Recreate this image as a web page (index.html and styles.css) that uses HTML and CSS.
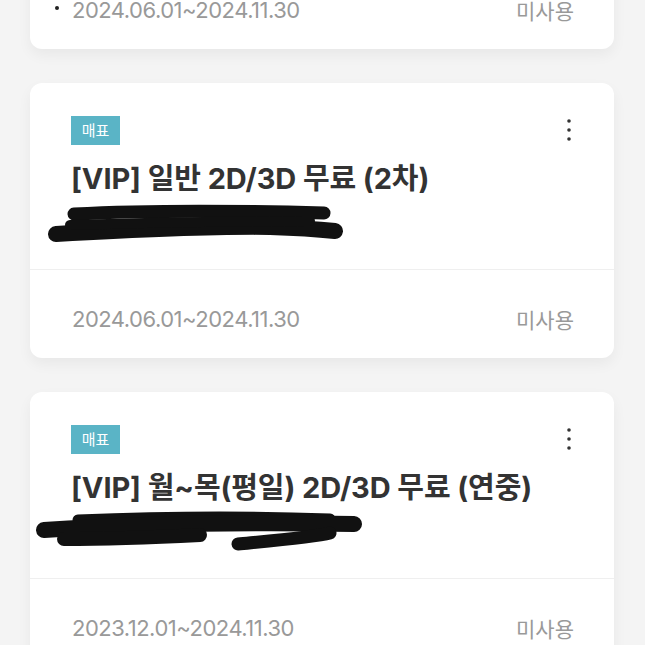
FILE: index.html
```html
<!DOCTYPE html>
<html lang="ko">
<head>
    <meta charset="UTF-8">
    <meta name="viewport" content="width=device-width, initial-scale=1.0">
    <title>쿠폰함</title>
    <link rel="stylesheet" href="styles.css">
</head>
<body>
    <div class="list">

        <!-- first card, scrolled mostly out of view -->
        <div class="card">
            <div class="card-top">
                <div class="card-head">
                    <span class="tag">매표</span>
                    <button class="more" aria-label="더보기">
                        <svg width="6" height="24" viewBox="0 0 6 24"><circle cx="3" cy="3" r="1.8"/><circle cx="3" cy="12" r="1.8"/><circle cx="3" cy="21" r="1.8"/></svg>
                    </button>
                </div>
                <h3 class="title">[VIP] 일반 2D/3D 무료 (1차)</h3>
                <div class="mask"></div>
            </div>
            <div class="card-bottom">
                <span class="period"><span class="dot"></span>2024.06.01~2024.11.30</span>
                <span class="state">미사용</span>
            </div>
        </div>

        <div class="card">
            <div class="card-top">
                <div class="card-head">
                    <span class="tag">매표</span>
                    <button class="more" aria-label="더보기">
                        <svg width="6" height="24" viewBox="0 0 6 24"><circle cx="3" cy="3" r="1.8"/><circle cx="3" cy="12" r="1.8"/><circle cx="3" cy="21" r="1.8"/></svg>
                    </button>
                </div>
                <h3 class="title">[VIP] 일반 2D/3D 무료 (2차)</h3>
                <!-- scribbled out code -->
                <svg class="mask" width="330" height="50" viewBox="0 0 330 50">
                    <path d="M44 15 C120 11 220 12 294 14" stroke="#111" stroke-width="13" fill="none" stroke-linecap="round"/>
                    <path d="M26 35 C100 31 180 27 240 28 C270 29 295 31 305 32" stroke="#111" stroke-width="16" fill="none" stroke-linecap="round"/>
                    <path d="M40 26 C110 24 200 22 280 22" stroke="#111" stroke-width="10" fill="none" stroke-linecap="round"/>
                </svg>
            </div>
            <div class="card-bottom">
                <span class="period">2024.06.01~2024.11.30</span>
                <span class="state">미사용</span>
            </div>
        </div>

        <div class="card">
            <div class="card-top">
                <div class="card-head">
                    <span class="tag">매표</span>
                    <button class="more" aria-label="더보기">
                        <svg width="6" height="24" viewBox="0 0 6 24"><circle cx="3" cy="3" r="1.8"/><circle cx="3" cy="12" r="1.8"/><circle cx="3" cy="21" r="1.8"/></svg>
                    </button>
                </div>
                <h3 class="title">[VIP] 월~목(평일) 2D/3D 무료 (연중)</h3>
                <svg class="mask" width="340" height="50" viewBox="0 0 340 50">
                    <path d="M48 12 C120 9 220 8 300 11" stroke="#111" stroke-width="11" fill="none" stroke-linecap="round"/>
                    <path d="M14 22 C90 17 200 14 324 16" stroke="#111" stroke-width="16" fill="none" stroke-linecap="round"/>
                    <path d="M34 31 C80 31 130 29 170 27" stroke="#111" stroke-width="14" fill="none" stroke-linecap="round"/>
                    <path d="M208 36 C250 32 285 29 300 25" stroke="#111" stroke-width="13" fill="none" stroke-linecap="round"/>
                </svg>
            </div>
            <div class="card-bottom">
                <span class="period">2023.12.01~2024.11.30</span>
                <span class="state">미사용</span>
            </div>
        </div>

    </div>
</body>
</html>
```

FILE: styles.css
```css
body {
    margin: 0;
    background-color: #f4f4f4;
    font-family: Inter, "Noto Sans CJK KR", sans-serif;
    overflow: hidden;
}

.list {
    margin-top: -226px;
    padding: 0 31px 0 30px;
}

.card {
    background-color: #fff;
    border-radius: 12px;
    margin-bottom: 34px;
    box-shadow: 0 6px 14px rgba(0, 0, 0, 0.05);
}

.card-top {
    height: 187px;
    padding: 33px 42px 0 41px;
    box-sizing: border-box;
    border-bottom: 1px solid #efefef;
}

.card-head {
    display: flex;
    justify-content: space-between;
    align-items: flex-start;
}

.tag {
    display: inline-block;
    width: 49px;
    height: 29px;
    line-height: 29px;
    text-align: center;
    background-color: #5ab4c6;
    color: #fff;
    font-size: 15px;
}

.more {
    border: none;
    background: none;
    padding: 0;
    margin-top: 2px;
    fill: #333;
    cursor: pointer;
}

.more svg {
    display: block;
}

.title {
    margin: 14px 0 0;
    font-size: 29px;
    line-height: 40px;
    font-weight: 700;
    color: #333;
    letter-spacing: -0.1px;
    white-space: nowrap;
}

.mask {
    display: block;
    margin: 0 0 0 -41px;
}

.card-bottom {
    height: 88px;
    padding: 9px 40px 0 42px;
    display: flex;
    justify-content: space-between;
    align-items: center;
    box-sizing: border-box;
    color: #999;
    font-size: 22px;
}

.period {
    letter-spacing: -0.5px;
    position: relative;
}

.state {
    font-size: 21px;
}

.dot {
    position: absolute;
    left: -17px;
    top: 9px;
    width: 4px;
    height: 4px;
    border-radius: 50%;
    background-color: #222;
}
```
